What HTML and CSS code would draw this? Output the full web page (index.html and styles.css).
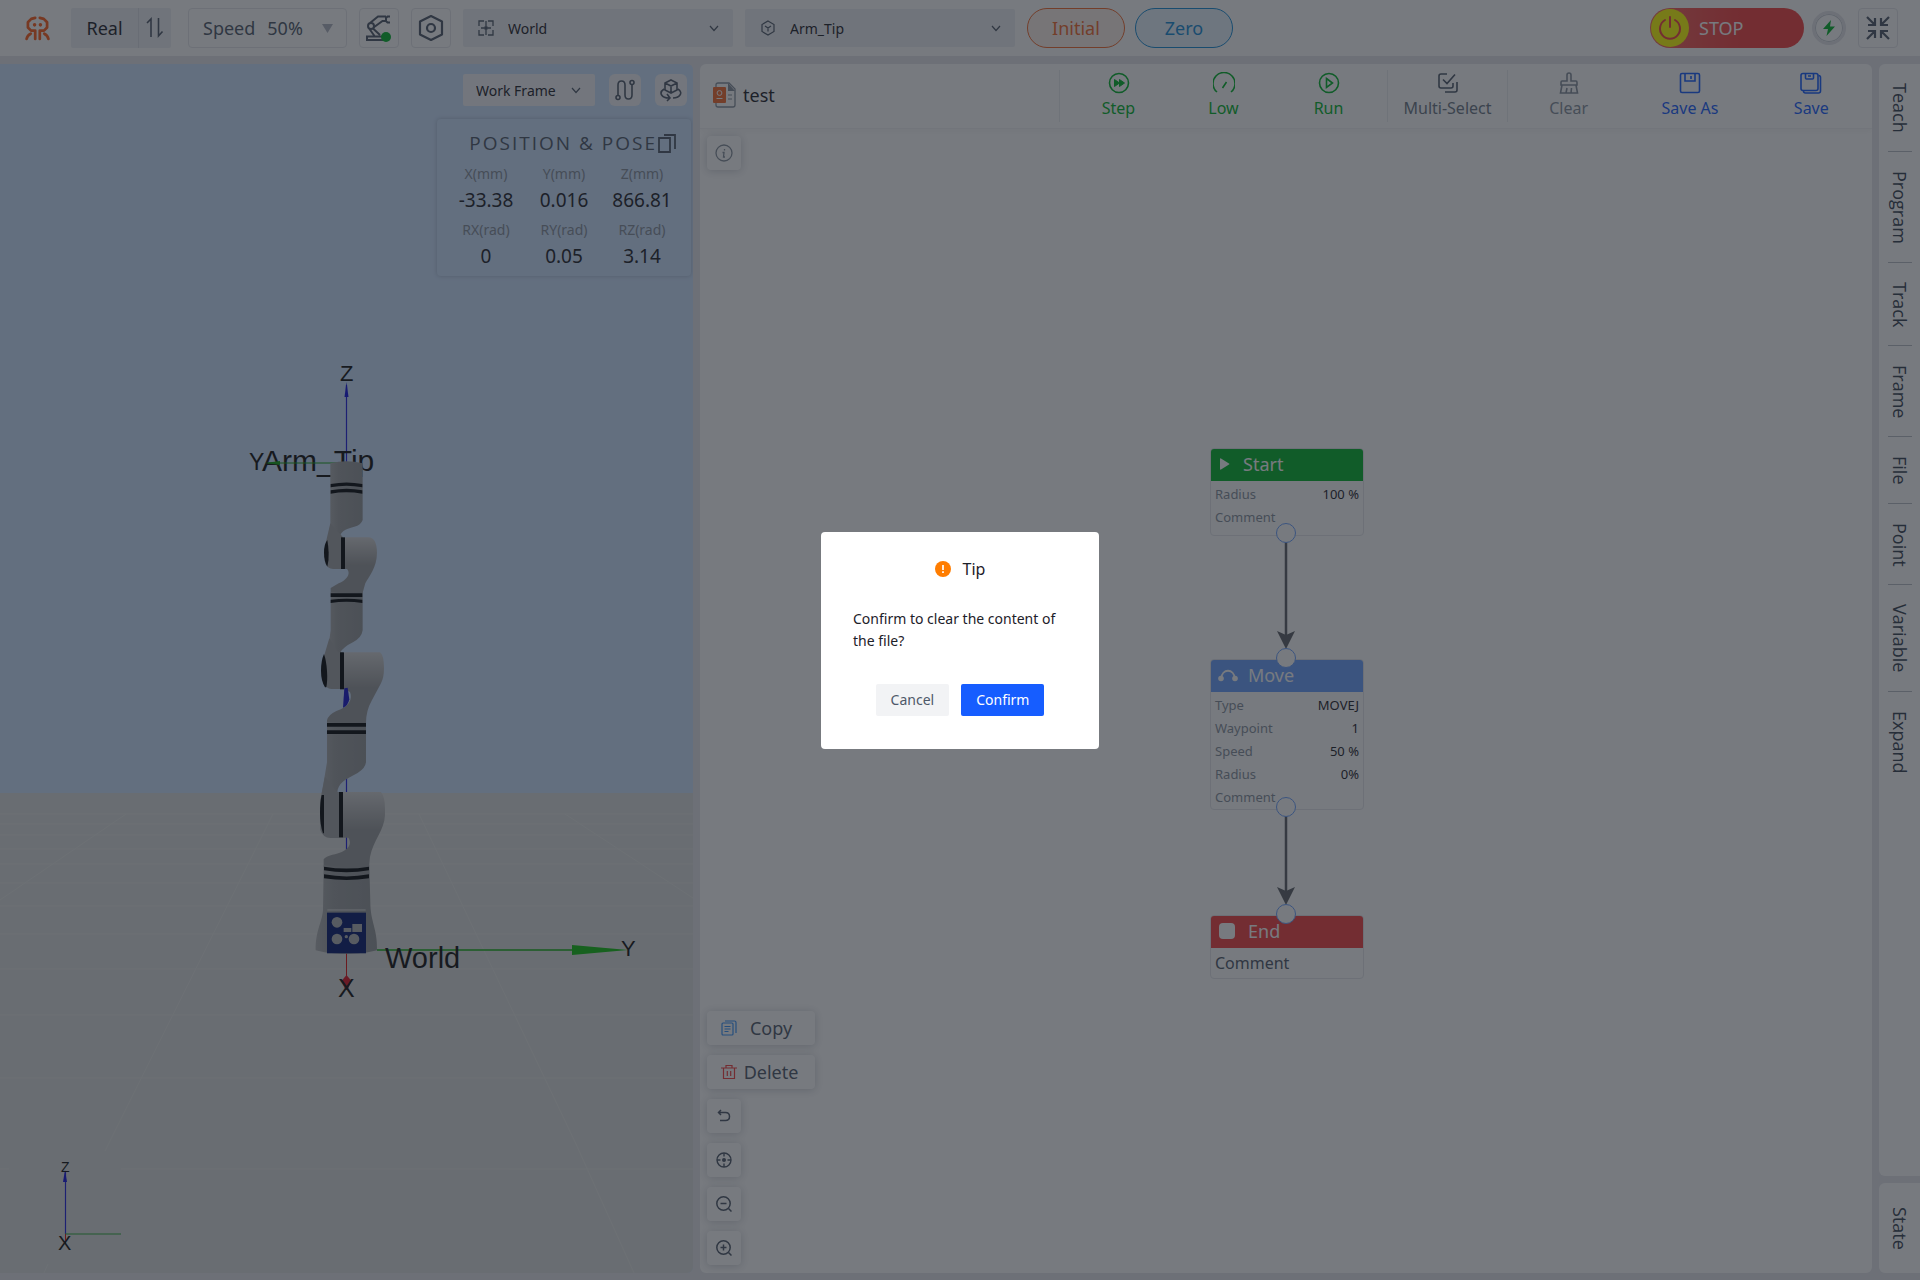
FILE: index.html
```html
<!DOCTYPE html>
<html lang="en">
<head>
<meta charset="utf-8">
<title>Robot Studio - test</title>
<link rel="stylesheet" href="styles.css">
</head>
<body>
<svg class="defs" aria-hidden="true">
  <symbol id="chevron" viewBox="0 0 12 12"><path d="M2 4l4 4.500 4-4.500" fill="none" stroke="currentColor" stroke-width="1.200"/></symbol>
</svg>
<div class="app">
  <header class="topbar">
    <svg class="logo" viewBox="0 0 24 24" fill="none" stroke="currentColor" stroke-width="2.600" stroke-linecap="round" stroke-linejoin="round">
      <path d="M9.800 1.800L6 2.800 2.800 6v5l3 3h4v8M14.200 1.800L18 2.800 21.200 6v5l-3 3h-4v8"/>
      <path d="M5.500 17q-3.300 1.500-4 5M18.500 17q3.300 1.500 4 5"/>
      <path d="M9.200 8.500h.01M14.800 8.500h.01" stroke-width="3.400"/>
    </svg>
    <div class="mode">
      <button class="mode-name" type="button">Real</button>
      <button class="mode-swap" type="button" aria-label="Swap mode">
        <svg width="20" height="22" viewBox="0 0 20 22" fill="none" stroke="currentColor" stroke-width="1.600"><path d="M2 6l4-4v18M13.500 1v18l4-4.500"/></svg>
      </button>
    </div>
    <div class="speed">
      <label for="speed">Speed</label>
      <select id="speed"><option>50%</option><option>100%</option></select>
      <svg class="speed-arrow" width="11" height="9" viewBox="0 0 11 9"><path d="M0 0h11L5.500 9z" fill="currentColor"/></svg>
    </div>
    <button class="square" type="button" aria-label="Robot status">
      <svg width="28" height="28" viewBox="0 0 28 28" fill="none" stroke="currentColor" stroke-width="2">
        <circle cx="6" cy="12" r="3"/><path d="M5 9l8-6.500h8M8.500 13.500l9-6.500h3M8 14.500l7 6.500M4.500 15l5 7M2 26v-3.500h16V26zM25 2.500h-2.500L21 4v3l1.500 1.500H25"/>
        <circle cx="21" cy="23" r="5" fill="#00b42a" stroke="none"/>
      </svg>
    </button>
    <button class="square" type="button" aria-label="Settings">
      <svg width="26" height="28" viewBox="0 0 26 28" fill="none" stroke="currentColor" stroke-width="2.200" stroke-linejoin="round"><path d="M13 2L24 7.500v13L13 26 2 20.500v-13z"/><circle cx="13" cy="14" r="4"/></svg>
    </button>
    <div class="picker">
      <svg width="16" height="16" viewBox="0 0 16 16" fill="none" stroke="currentColor" stroke-width="1.300"><path d="M1 6V1h5M10 1h5v5M15 10v5h-5M6 15H1v-5M3 8h3M10 8h3M8 1v5M8 10v5"/><circle cx="8" cy="8" r="2" fill="currentColor" stroke="none"/></svg>
      <select aria-label="World frame"><option>World</option></select>
      <svg class="chev"><use href="#chevron"/></svg>
    </div>
    <div class="picker">
      <svg width="16" height="16" viewBox="0 0 16 16" fill="none" stroke="currentColor" stroke-width="1.200"><path d="M8 1l6 3.500v7L8 15l-6-3.500v-7zM5 6l3 2 3-2M8 8v3.500"/></svg>
      <select aria-label="Tool frame"><option>Arm_Tip</option></select>
      <svg class="chev"><use href="#chevron"/></svg>
    </div>
    <button class="pill pill-initial" type="button">Initial</button>
    <button class="pill pill-zero" type="button">Zero</button>
    <div class="topbar-end">
      <button class="stop" type="button">
        <span class="stop-knob"><svg width="26" height="26" viewBox="0 0 26 26" fill="none" stroke="currentColor" stroke-width="2" stroke-linecap="round"><path d="M13 2v10M8 5a10 10 0 1 0 10 0"/></svg></span>
        <span>STOP</span>
      </button>
      <span class="power"><svg width="14" height="16" viewBox="0 0 14 16"><path d="M9 0L1 9h5l-1.500 7L13 6.500H8z" fill="#00b42a"/></svg></span>
      <button class="square" type="button" aria-label="Exit full screen">
        <svg width="26" height="26" viewBox="0 0 26 26" fill="none" stroke="currentColor" stroke-width="2.200"><path d="M2 2l8 8M10 3v7H3M24 2l-8 8M16 3v7h7M2 24l8-8M10 23v-7H3M24 24l-8-8M16 23v-7h7"/></svg>
      </button>
    </div>
  </header>

  <main class="workspace">
    <section class="viewer" aria-label="3D view">
      <svg class="scene" viewBox="0 64 693 1209" preserveAspectRatio="xMidYMid slice">
        <defs>
          <linearGradient id="joint" x1="0" y1="0" x2="0" y2="1"><stop offset="0" stop-color="#d4d5d6"/><stop offset=".2" stop-color="#bcbdbe"/><stop offset=".5" stop-color="#9a9c9e"/><stop offset="1" stop-color="#9a9c9e"/></linearGradient>
          <linearGradient id="link" x1="0" y1="0" x2="1" y2="0"><stop offset="0" stop-color="#b0b2b4"/><stop offset=".3" stop-color="#9da0a2"/><stop offset="1" stop-color="#94979a"/></linearGradient>
        </defs>
        <rect x="0" y="64" width="693" height="729" fill="#cde3ff"/>
        <rect x="0" y="793" width="693" height="480" fill="#dddfde"/>
        <g stroke="#e8eae8" stroke-width="1" fill="none" opacity=".7">
          <path d="M0 814h693M0 824h693M0 835h693M0 849h693M0 864h693M0 883h693M0 906h693M0 934h693M0 969h693M0 1015h693M0 1078h693M0 1169h9M121 1169h572"/>
          <path d="M126 814L0 900M273 814L105 1151M48 1264l-4 9M419 814l157 330 58 129M565 814l128 84"/>
        </g>
        <!-- the vertical axis shows only in the gaps of the arm -->
        <path d="M346.500 385v77M346.500 775v20M346.500 834v16" stroke="#2020e0" stroke-width="1.200"/>
        <path d="M346.500 382l-2 15h4z" fill="#1010e0"/>
        <g font-family="Liberation Sans, Arial, sans-serif" fill="#111">
          <text x="340" y="381" font-size="22">Z</text>
          <text x="249" y="470" font-size="23">Y</text>
          <text x="262" y="471" font-size="30">Arm_Tip</text>
        </g>
        <path d="M268 463h70" stroke="#10a010" stroke-width="1"/><path d="M265 463l15-2v4z" fill="#10a010"/>
        <path d="M377 950h210" stroke="#10b010" stroke-width="1.500"/><path d="M572 945v10l56-5z" fill="#10c010"/>
        <path d="M346.500 952v26" stroke="#e01010"/><path d="M346.500 975l5 6-4 9h-2l-4-9z" fill="#e01020"/>
        <!-- upper arm -->
        <g transform="translate(230 350) scale(.3333)">
          <path d="M301 340q48-12 97 0v170q-5 15-25 20c-30 8-44 16-43 35H297V560l4-40z" fill="url(#link)"/>
          <path d="M302 402q48-9 95 0v10q-48-9-95 0zM302 421q48-9 95 0v10q-48-9-95 0z" fill="#06090c"/>
          <path d="M301 520l-14 60v60q6 17 22 17h30v-95z" fill="#a3a5a7"/>
          <path d="M292 570q-10 12-10 38t10 42q5-20 4-42t-4-38z" fill="#06090c"/>
          <path d="M345 562h70q25 0 26 46c0 45-25 72-35 92l-8 28h-96v-14l24-14c35-15 33-35 25-43h-6z" fill="url(#joint)"/>
          <path d="M333 562h12v95h-12z" fill="#06090c"/>
          <path d="M302 726h96v115q-3 22-28 35-30 15-40 32l-38 10q-3-20 6-47l4-30z" fill="url(#link)"/>
          <path d="M302 730h95v11h-95zM302 749q48-5 95 0v10q-48-7-95 0z" fill="#06090c"/>
          <path d="M298 865l-18 60v70q8 22 24 22h35V907h-15z" fill="#a3a5a7"/>
          <path d="M282 912q-9 20-9 50t12 50h4q4-20 2-50t-9-50z" fill="#06090c"/>
        </g>
        <!-- lower arm and base -->
        <g transform="translate(230 680) scale(.3333)">
          <path d="M342-83h108q12 8 12 48 0 28-9 45L425 62q-17 30-17 67H291v-8q4-17 28-28c40-12 49-37 41-57l-18-9z" fill="url(#joint)"/>
          <path d="M330-83h12V28h-12z" fill="#06090c"/>
          <path d="M343 25l10-2 5 35q-4 20-19 25z" fill="#1515d0"/>
          <path d="M291 127h117v120q-2 18-25 32c-40 20-60 32-61 60l-42 20-5-20q4-20 9-50l7-42z" fill="url(#link)"/>
          <path d="M291 129h117v11H291zM291 151h117v11H291z" fill="#06090c"/>
          <path d="M285 290l-14 70v90q8 24 30 24h38V336h-17z" fill="#a3a5a7"/>
          <path d="M275 345q-5 20-5 55t9 60h3V345z" fill="#06090c"/>
          <path d="M338 336h115q12 15 12 50v20c-2 45-35 75-45 125l-3 30H281v-23q6-9 26-14c45-8 62-30 48-51h-17z" fill="url(#joint)"/>
          <path d="M327 336h12v136h-12z" fill="#06090c"/>
          <path d="M281 556q68 10 137 0l3 110c0 60 22 80 20 145-50 14-136 14-184 0 0-60 18-80 22-120z" fill="url(#link)"/>
          <path d="M282 560q68 11 135 0v11q-67 12-135 0zM282 583q68 13 135 0v12q-67 10-135 0z" fill="#06090c"/>
          <path d="M292 690h115" stroke="#ddd" stroke-width="3"/>
          <rect x="291" y="698" width="117" height="122" fill="#04186e"/>
          <g fill="#b0b2b4"><circle cx="321" cy="727" r="16"/><circle cx="321" cy="777" r="16"/><circle cx="372" cy="777" r="16"/><circle cx="349" cy="770" r="5"/><rect x="341" y="744" width="23" height="12"/><rect x="367" y="732" width="29" height="24"/></g>
        </g>
        <path d="M65.500 1172v62" stroke="#2020e0" stroke-width="1.200"/><path d="M65 1170l-2 12h4z" fill="#1010e0"/>
        <path d="M65 1234h56" stroke="#30b040" stroke-width="1.500" opacity=".7"/><path d="M65.500 1234v10" stroke="#e01010"/>
        <g font-family="Liberation Sans, Arial, sans-serif" fill="#111">
          <text x="385" y="968" font-size="29">World</text>
          <text x="621" y="956" font-size="22">Y</text>
          <text x="338" y="997" font-size="25">X</text>
          <text x="61" y="1172" font-size="14">Z</text>
          <text x="58" y="1250" font-size="20">X</text>
        </g>
      </svg>
      <div class="viewer-tools">
        <div class="frame-select">
          <select aria-label="Frame"><option>Work Frame</option></select>
          <svg class="chev"><use href="#chevron"/></svg>
        </div>
        <button class="tool" type="button" aria-label="Trajectory">
          <svg width="22" height="22" viewBox="0 0 22 22" fill="none" stroke="currentColor" stroke-width="1.600"><circle cx="4" cy="18.500" r="2"/><circle cx="18" cy="3.500" r="2"/><path d="M4 16.500V6q0-4 3.500-4T11 6v10q0 4 3.500 4t3.500-4V5.500"/></svg>
        </button>
        <button class="tool" type="button" aria-label="Rotate view">
          <svg width="24" height="24" viewBox="0 0 24 24" fill="none" stroke="currentColor" stroke-width="1.600"><path d="M12 2l6 3v7l-6 3-6-3V5zM6 5l6 3 6-3M12 8v7M5 11c-6 4-2 9 5 9M8 16l3 4-3 3M19 11c6 4 1 9-5 9"/></svg>
        </button>
      </div>
      <div class="pose">
        <div class="pose-head"><h2>POSITION &amp; POSE</h2>
          <button class="bare" type="button" aria-label="Copy pose"><svg width="20" height="20" viewBox="0 0 20 20" fill="none" stroke="currentColor" stroke-width="1.800"><path d="M2 5h11v14H2zM7 2h11v14"/></svg></button>
        </div>
        <dl class="pose-grid">
          <div><dt>X(mm)</dt><dd>-33.38</dd></div>
          <div><dt>Y(mm)</dt><dd>0.016</dd></div>
          <div><dt>Z(mm)</dt><dd>866.81</dd></div>
          <div><dt>RX(rad)</dt><dd>0</dd></div>
          <div><dt>RY(rad)</dt><dd>0.05</dd></div>
          <div><dt>RZ(rad)</dt><dd>3.14</dd></div>
        </dl>
      </div>
    </section>

    <section class="editor" aria-label="Program editor">
      <div class="editor-bar">
        <div class="file">
          <svg width="24" height="26" viewBox="0 0 24 26"><path d="M5 1h11l6 6v16q0 2-2 2H5q-2 0-2-2V3q0-2 2-2z" fill="none" stroke="#86909c" stroke-width="1.300"/><path d="M15 1l7 8h-7z" fill="#86909c"/><path d="M15 13h4M15 17h4" stroke="#86909c"/><rect x="0" y="5" width="13" height="16" rx="1" fill="#f5692c"/><circle cx="6.500" cy="11" r="2.400" fill="none" stroke="#fff"/><path d="M3.500 16.500h6" stroke="#fff"/></svg>
          <span>test</span>
        </div>
        <div class="group group-run">
          <button class="action green" type="button"><svg viewBox="0 0 22 22"><circle cx="11" cy="11" r="9.500"/><path d="M6.500 7.500l5 3.500-5 3.500zM11.500 7.500l5 3.500-5 3.500z" fill="currentColor" stroke-width="1"/></svg>Step</button>
          <button class="action green" type="button"><svg viewBox="0 0 22 22"><path d="M4 20a11 11 0 1 1 14 0M9.500 16l4-6"/></svg>Low</button>
          <button class="action green" type="button"><svg viewBox="0 0 22 22"><circle cx="11" cy="11" r="9.500"/><path d="M8.500 6.500l6 4.500-6 4.500z"/></svg>Run</button>
        </div>
        <div class="group">
          <button class="action slate" type="button"><svg viewBox="0 0 22 22"><path d="M10 2H4q-2 0-2 2v10q0 2 2 2h10q2 0 2-2v-3M6 7.500l4 4 8-9M20 10v8q0 2-2 2H8"/></svg>Multi-Select</button>
        </div>
        <div class="group group-file">
          <button class="action muted" type="button"><svg viewBox="0 0 22 22"><path d="M9 9V3q0-2 2-2t2 2v6h5q1 0 1 1.500V13H3v-2.500Q3 9 4 9zM4 13L2.500 21h17L18 13M8 21l1-5M13 21l.500-5"/></svg>Clear</button>
          <button class="action blue" type="button"><svg viewBox="0 0 22 22"><rect x="1.500" y="1.500" width="19" height="19" rx="1.500"/><path d="M6 2v7h10V2M12 4v3"/></svg>Save As</button>
          <button class="action blue" type="button"><svg viewBox="0 0 22 22"><rect x="1" y="1.500" width="17" height="17" rx="2"/><path d="M5.500 2v4q0 1 1 1h6q1 0 1-1V2M8 4h3M18.500 3.500q2 0 2 2V19q0 2-2 2H5.500q-2 0-2-2"/></svg>Save</button>
        </div>
      </div>
      <div class="canvas">
        <button class="card info" type="button" aria-label="Information"><svg width="18" height="18" viewBox="0 0 18 18" fill="none" stroke="currentColor" stroke-width="1.300"><circle cx="9" cy="9" r="8"/><path d="M9.500 5v1.500M7.500 8.500h1.500L8.500 13h1.500"/></svg></button>

        <div class="flow">
          <article class="node node-start">
            <h3 class="node-head start"><svg width="14" height="14" viewBox="0 0 14 14"><path d="M1 2v10q0 1 1 .5l8-5q1-.500 0-1l-8-5Q1 1 1 2z" fill="currentColor"/></svg>Start</h3>
            <dl class="props"><div><dt>Radius</dt><dd>100 %</dd></div><div><dt>Comment</dt><dd></dd></div></dl>
            <i class="port out"></i>
          </article>
          <svg class="link-line" viewBox="0 0 18 123"><path d="M9 0v100" stroke="currentColor" stroke-width="2.500"/><path d="M0 95l9 18 9-18-9 4z" fill="currentColor"/></svg>
          <article class="node">
            <i class="port in"></i>
            <h3 class="node-head move"><svg width="20" height="14" viewBox="0 0 20 14"><path d="M3 11C4 0 16 0 17 11" fill="none" stroke="currentColor" stroke-width="2"/><circle cx="3" cy="10.500" r="2.800" fill="currentColor"/><circle cx="17" cy="10.500" r="2.800" fill="currentColor"/></svg>Move</h3>
            <dl class="props"><div><dt>Type</dt><dd>MOVEJ</dd></div><div><dt>Waypoint</dt><dd>1</dd></div><div><dt>Speed</dt><dd>50 %</dd></div><div><dt>Radius</dt><dd>0%</dd></div><div><dt>Comment</dt><dd></dd></div></dl>
            <i class="port out"></i>
          </article>
          <svg class="link-line short" viewBox="0 0 18 105"><path d="M9 0v82" stroke="currentColor" stroke-width="2.500"/><path d="M0 77l9 18 9-18-9 4z" fill="currentColor"/></svg>
          <article class="node">
            <i class="port in"></i>
            <h3 class="node-head end"><svg width="20" height="16" viewBox="0 0 20 16"><rect x="1" width="16" height="16" rx="4" fill="currentColor"/></svg>End</h3>
            <p class="note">Comment</p>
          </article>
        </div>

        <div class="canvas-tools">
          <button class="card wide copy" type="button"><svg width="16" height="16" viewBox="0 0 16 16" fill="none" stroke="currentColor" stroke-width="1.200"><rect x="1" y="3" width="11" height="12" rx="1"/><path d="M4 1h9.500q1.500 0 1.500 1.500V13M3.500 6.500h6M3.500 9h6M3.500 11.500h4"/></svg><span>Copy</span></button>
          <button class="card wide delete" type="button"><svg width="16" height="16" viewBox="0 0 16 16" fill="none" stroke="currentColor" stroke-width="1.200"><path d="M0 4h16M5 4V1.500h6V4M2.500 4v10.500h11V4M6.300 7v5M9.700 7v5"/></svg><span>Delete</span></button>
          <button class="card" type="button" aria-label="Undo"><svg width="14" height="14" viewBox="0 0 14 14" fill="none" stroke="currentColor" stroke-width="1.500"><path d="M4 1L1.500 3.500 4 6M1.500 3.500h7q4 0 4 4t-4 4H3"/></svg></button>
          <button class="card" type="button" aria-label="Center"><svg width="16" height="16" viewBox="0 0 16 16" fill="none" stroke="currentColor" stroke-width="1.400"><circle cx="8" cy="8" r="7"/><path d="M8 1v3.500M8 11.500V15M1 8h3.500M11.500 8H15"/><circle cx="8" cy="8" r="2" fill="currentColor" stroke="none"/></svg></button>
          <button class="card" type="button" aria-label="Zoom out"><svg width="16" height="16" viewBox="0 0 16 16" fill="none" stroke="currentColor" stroke-width="1.500"><circle cx="7.500" cy="7.500" r="6.700"/><path d="M4.500 7.500h6M12.500 12.500l3 3"/></svg></button>
          <button class="card" type="button" aria-label="Zoom in"><svg width="16" height="16" viewBox="0 0 16 16" fill="none" stroke="currentColor" stroke-width="1.500"><circle cx="7.500" cy="7.500" r="6.700"/><path d="M4.500 7.500h6M7.500 4.500v6M12.500 12.500l3 3"/></svg></button>
        </div>
      </div>
    </section>

    <aside class="rail">
      <nav class="rail-main">
        <a href="#teach">Teach</a><a href="#program">Program</a><a href="#track">Track</a><a href="#frame">Frame</a><a href="#file">File</a><a href="#point">Point</a><a href="#variable">Variable</a><a href="#expand">Expand</a>
      </nav>
      <nav class="rail-state"><a href="#state">State</a></nav>
    </aside>
  </main>
</div>

<div class="mask">
  <div class="dialog" role="dialog" aria-modal="true" aria-labelledby="dialog-title">
    <h2 id="dialog-title"><svg width="16" height="16" viewBox="0 0 16 16"><circle cx="8" cy="8" r="8" fill="#ff7d00"/><path d="M8 4v5M8 10.200v1.800" stroke="#fff" stroke-width="1.700"/></svg>Tip</h2>
    <p>Confirm to clear the content of the file?</p>
    <div class="dialog-actions">
      <button class="btn" type="button">Cancel</button>
      <button class="btn primary" type="button">Confirm</button>
    </div>
  </div>
</div>
</body>
</html>
```
FILE: styles.css
```css
:root {
  --ink: #1d2129;
  --slate: #4e5969;
  --muted: #86909c;
  --fill: #eef0f4;
  --line: #e5e6eb;
  --green: #00b42a;
  --blue: #165dff;
}
* { box-sizing: border-box; }
body {
  margin: 0;
  background: var(--line);
  color: var(--ink);
  font-family: "Noto Sans", "Open Sans", sans-serif;
  font-size: 16px;
}
h2, h3, p, dl, dd { margin: 0; font-weight: 400; }
button, select { font: inherit; color: inherit; border: 0; background: none; padding: 0; margin: 0; }
select { appearance: none; min-width: 0; }
svg { flex: none; display: block; }
a { color: inherit; text-decoration: none; }
.defs { width: 0; height: 0; position: absolute; }
.app { display: flex; flex-direction: column; height: 100vh; }

/* top bar */
.topbar { display: flex; align-items: center; height: 56px; padding: 0 22px 0 25px; background: #fff; gap: 12px; }
.logo { width: 25px; height: 25px; color: #ff5c1a; margin-right: 9px; }
.mode { display: flex; width: 100px; height: 40px; background: var(--fill); border-radius: 2px; margin-right: 5px; }
.mode-name { width: 68px; font-size: 18px; border-right: 1px solid #dcdee6; }
.mode-swap { flex: 1; display: grid; place-items: center; color: var(--slate); }
.speed { display: flex; align-items: center; gap: 12px; width: 159px; height: 40px; padding: 0 13px 0 14px; border: 1px solid var(--line); border-radius: 4px; font-size: 18px; color: var(--slate); }
.speed select { flex: 1; }
.speed-arrow { color: #b0b4c0; }
.square { display: grid; place-items: center; width: 40px; height: 40px; border: 1px solid var(--line); border-radius: 4px; color: #4e5969; }
.picker { display: flex; align-items: center; gap: 14px; width: 270px; height: 38px; padding: 0 13px 0 15px; background: var(--fill); border-radius: 2px; font-size: 14px; }
.picker > svg:first-child { color: var(--slate); }
.picker select { flex: 1; }
.chev { width: 12px; height: 12px; color: var(--slate); }
.pill { width: 98px; height: 40px; border-radius: 20px; border: 1px solid; font-size: 18px; }
.pill-initial { color: #f5692c; background: #fff3ec; }
.pill-zero { color: #168cd8; background: #e8f6ff; margin-left: -2px; }
.topbar-end { display: flex; align-items: center; gap: 8px; margin-left: auto; }
.stop { display: flex; align-items: center; gap: 10px; width: 154px; height: 40px; padding: 1px; border-radius: 20px; background: linear-gradient(90deg, #f76560, #f53f3f 60%); color: #fff; font-size: 18px; }
.stop-knob { display: grid; place-items: center; width: 38px; height: 38px; border-radius: 50%; background: #ffff00; color: #f53f3f; }
.power { display: grid; place-items: center; width: 34px; height: 34px; border: 3px solid #e5e6eb; border-radius: 50%; box-shadow: inset 0 0 0 1px #c9cdd4; margin-right: 4px; }

/* workspace */
.workspace { flex: 1; min-height: 0; display: grid; grid-template-columns: minmax(0, 693fr) minmax(0, 1172fr) 41px; gap: 7px; padding: 8px 0 7px; }
.viewer { position: relative; display: flex; flex-direction: column; align-items: flex-end; border-radius: 0 6px 6px 0; overflow: hidden; background: #cde3ff; }
.scene { position: absolute; inset: 0; width: 100%; height: 100%; }
.viewer-tools { position: relative; display: flex; gap: 14px; padding: 10px 6px 13px; }
.frame-select { display: flex; align-items: center; width: 132px; height: 32px; padding: 0 13px; background: #f4f6fa; border-radius: 2px; font-size: 14px; }
.frame-select select { flex: 1; }
.tool { display: grid; place-items: center; width: 32px; height: 32px; border-radius: 6px; background: #f4f6fa; color: var(--slate); }
.pose { position: relative; width: 254px; height: 157px; margin-right: 2px; padding: 12px 10px; border-radius: 4px; box-shadow: 0 0 4px rgba(80, 90, 110, .35); }
.pose-head { display: flex; align-items: center; justify-content: flex-end; height: 24px; padding-right: 4px; color: var(--slate); }
.pose-head h2 { font-family: "Open Sans", sans-serif; font-size: 19px; letter-spacing: 2px; white-space: nowrap; }
.pose-grid { display: grid; grid-template-columns: repeat(3, 1fr); text-align: center; padding-top: 7px; }
.pose-grid > div { height: 56px; }
.pose-grid dt { font-size: 14px; line-height: 24px; color: var(--muted); }
.pose-grid dd { font-size: 19px; line-height: 28px; }

/* editor */
.editor { display: flex; flex-direction: column; background: #fff; border-radius: 6px; overflow: hidden; }
.editor-bar { display: flex; align-items: center; height: 65px; border-bottom: 1px solid #f2f3f5; box-shadow: 0 2px 6px rgba(0, 0, 0, .04); }
.file { flex: 1; display: flex; align-items: center; gap: 6px; padding: 0 0 2px 13px; font-size: 18px; }
.group { display: flex; width: 120px; height: 52px; border-left: 1px solid #eceef1; }
.group-run { width: 328px; padding: 0 6px; }
.group-file { width: 365px; }
.action { flex: 1; display: flex; flex-direction: column; align-items: center; gap: 3px; font-size: 16px; line-height: 22px; padding-top: 2px; white-space: nowrap; }
.action svg { width: 22px; height: 22px; fill: none; stroke: currentColor; stroke-width: 1.6; }
.green { color: var(--green); }
.slate { color: #6b7785; }
.slate svg { color: var(--slate); }
.muted { color: var(--muted); }
.blue { color: var(--blue); }
.canvas { position: relative; flex: 1; display: flex; flex-direction: column; align-items: flex-start; padding: 7px; }
.card { display: grid; place-items: center; width: 34px; height: 34px; border-radius: 4px; background: #fff; box-shadow: 0 1px 8px rgba(40, 50, 70, .24); color: var(--slate); }
.info { color: var(--muted); }
.canvas-tools { display: flex; flex-direction: column; gap: 10px; margin-top: auto; padding-bottom: 1px; }
.wide { grid-template-columns: 16px 1fr; width: 108px; padding: 0 10px 0 14px; font-size: 18px; }
.copy svg { color: #3491fa; }
.delete svg { color: #f53f3f; }

/* flow chart */
.flow { position: absolute; left: 510px; top: 319px; width: 154px; display: flex; flex-direction: column; align-items: center; }
.node { position: relative; width: 154px; border: 1px solid #e5e6eb; border-radius: 4px; font-size: 13px; }
.node-head { display: flex; align-items: center; gap: 10px; height: 32px; padding: 0 7px 2px; border-radius: 3px 3px 0 0; color: #fff; font-size: 18px; }
.start { background: var(--green); padding-left: 8px; }
.move { background: #6aa1ff; }
.end { background: #f53f3f; }
.props { padding: 2px 4px 0; }
.node-start .props { padding-bottom: 6px; }
.props > div { display: flex; justify-content: space-between; height: 23px; line-height: 23px; }
.props dt { color: var(--muted); }
.note { padding: 0 4px; font-size: 16px; line-height: 30px; color: var(--slate); }
.port { position: absolute; left: 50%; width: 20px; height: 20px; margin-left: -11px; border: 1px solid #6aa1ff; border-radius: 50%; background: #fff; }
.in { top: -12px; }
.out { bottom: -8px; }
.link-line { width: 18px; height: 123px; margin-left: -2px; color: #5c6066; }
.short { height: 105px; }

/* side rail */
.rail { display: flex; flex-direction: column; gap: 7px; color: #364150; font-family: "Open Sans", "Noto Sans", sans-serif; font-size: 18px; }
.rail nav { background: #fff; border-radius: 6px 0 0 6px; display: flex; flex-direction: column; align-items: center; }
.rail-main { flex: 1; }
.rail a { writing-mode: vertical-rl; line-height: 24px; }
.rail-main a { padding: 19px 0 18px; }
.rail-main a + a { border-top: 1px solid #b9bdc6; }
.rail-state { height: 90px; justify-content: center; }

/* dialog */
.mask { position: fixed; inset: 0; display: grid; place-items: center; background: rgba(29, 33, 41, .6); }
.dialog { width: 278px; padding: 23px 32px 33px; background: #fff; border-radius: 4px; }
.dialog h2 { display: flex; align-items: center; justify-content: center; gap: 12px; font-size: 16px; line-height: 28px; }
.dialog p { margin-top: 25px; font-size: 14px; line-height: 22px; }
.dialog-actions { display: flex; justify-content: center; gap: 12px; margin-top: 32px; }
.btn { height: 32px; padding: 0 15px; border-radius: 2px; background: #f2f3f5; color: var(--slate); font-size: 14px; }
.primary { background: var(--blue); color: #fff; }
```
